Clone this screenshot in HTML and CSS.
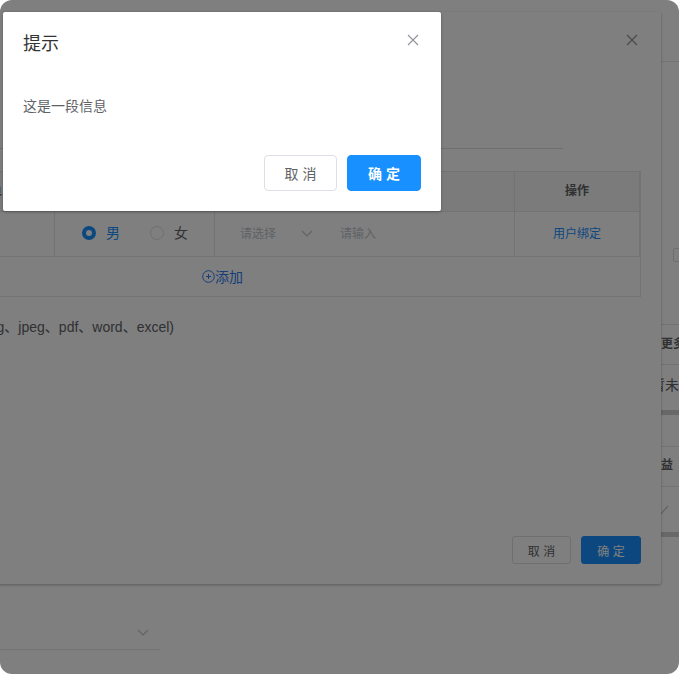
FILE: index.html
```html
<!DOCTYPE html>
<html lang="zh-CN">
<head>
<meta charset="utf-8">
<title>提示</title>
<link rel="stylesheet" href="styles.css">
</head>
<body>
<div class="window">
  <div class="page">
    <div class="page-left">
      <div class="select-under">
        <svg class="chev" width="12" height="7" viewBox="0 0 12 7"><path d="M1 1l5 5 5-5" fill="none" stroke="#c0c4cc" stroke-width="1.2"/></svg>
      </div>
    </div>
    <div class="page-right">
      <div class="checkbox-row"><span class="checkbox"></span></div>
      <div class="side-head">更多</div>
      <div class="side-cell">暂未设</div>
      <div class="side-bar"></div>
      <div class="side-head side-second">收益</div>
      <div class="side-check">
        <svg width="24" height="14" viewBox="0 0 24 14"><path d="M6 10l4 3 8-9" fill="none" stroke="#c0c4cc" stroke-width="1.2"/></svg>
      </div>
      <div class="side-bar"></div>
    </div>
  </div>

  <section class="dialog">
    <svg class="close close-back" width="12" height="12" viewBox="0 0 12 12"><path d="M1 1l10 10M11 1L1 11" stroke="#909399" stroke-width="1.1"/></svg>
    <div class="field"></div>
    <div class="table">
      <div class="row row-head">
        <div class="cell cell-name">用户名单</div>
        <div class="cell"></div>
        <div class="cell"></div>
        <div class="cell cell-center">操作</div>
      </div>
      <div class="row row-body">
        <div class="cell"></div>
        <div class="cell cell-gender">
          <span class="radio radio-on"></span><span class="radio-label label-on">男</span>
          <span class="radio radio-second"></span><span class="radio-label">女</span>
        </div>
        <div class="cell cell-inputs">
          <span class="placeholder">请选择</span>
          <svg class="input-chev" width="12" height="7" viewBox="0 0 12 7"><path d="M1 1l5 5 5-5" fill="none" stroke="#c0c4cc" stroke-width="1.1"/></svg>
          <span class="placeholder">请输入</span>
        </div>
        <div class="cell cell-center link">用户绑定</div>
      </div>
      <div class="row-add">
        <svg width="13" height="13" viewBox="0 0 13 13"><circle cx="6.5" cy="6.5" r="5.8" fill="none" stroke="#2f7cf0" stroke-width="1"/><path d="M6.5 4v5M4 6.5h5" stroke="#2f7cf0" stroke-width="1"/></svg>
        <span>添加</span>
      </div>
    </div>
    <p class="hint">支持上传文件类型(jpg、png、jpeg、pdf、word、excel)</p>
    <div class="dialog-footer">
      <button class="btn btn-small">取 消</button>
      <button class="btn btn-small btn-primary">确 定</button>
    </div>
  </section>

  <div class="mask"></div>

  <section class="alert">
    <svg class="close close-front" width="12" height="12" viewBox="0 0 12 12"><path d="M1 1l10 10M11 1L1 11" stroke="#909399" stroke-width="1.1"/></svg>
    <h2 class="alert-title">提示</h2>
    <p class="alert-msg">这是一段信息</p>
    <div class="alert-footer">
      <button class="btn btn-large">取 消</button>
      <button class="btn btn-large btn-primary btn-strong">确 定</button>
    </div>
  </section>
</div>
</body>
</html>
```
FILE: styles.css
```css
* { box-sizing: border-box; }
html, body { margin: 0; height: 100%; background: #fff; }
body { font-family: "Liberation Sans", "Noto Sans CJK SC", sans-serif; font-size: 14px; color: #606266; }

.window { position: relative; width: 679px; height: 674px; overflow: hidden; border-radius: 12px; background: #fff; }

.page { display: flex; justify-content: space-between; height: 100%; }
.page-left { width: 160px; padding-top: 614px; }
.select-under { display: flex; justify-content: flex-end; height: 36px; padding: 15px 11px 0 0; border-bottom: 1px solid #e4e7ed; }
.chev { display: block; }
.page-right { width: 29px; padding-top: 61px; display: flex; flex-direction: column; }
.page-right::before { content: ""; height: 1px; background: #e4e7ed; margin-bottom: 186px; flex: none; }
.checkbox-row { height: 76px; padding-left: 23px; flex: none; }
.checkbox { display: block; width: 14px; height: 14px; border: 1px solid #dcdfe6; border-radius: 2px; }
.side-head, .side-cell { white-space: nowrap; overflow: hidden; border-top: 1px solid #e4e7ed; flex: none; }
.side-head { height: 40px; line-height: 39px; padding-left: 11px; font-weight: 700; font-size: 12px; color: #606266; }
.side-cell { height: 46px; line-height: 41px; padding-left: 1px; font-size: 14px; color: #606266; }
.side-bar { height: 5px; background: #d0d0d0; flex: none; }
.side-second { margin-top: 31px; padding-left: 0; text-indent: -1px; line-height: 37px; }
.side-check { height: 46px; border-top: 1px solid #e4e7ed; padding-top: 15px; flex: none; }
.side-check svg { display: block; }

.dialog { position: absolute; left: -200px; top: 12px; width: 861px; height: 572px; padding: 136px 20px 20px; background: #fff; border-radius: 2px; box-shadow: 0 1px 3px rgba(0,0,0,.3); display: flex; flex-direction: column; }
.close { position: absolute; display: block; }
.close-back { right: 23px; top: 22px; }
.field { height: 1px; margin: 0 78px 22px 0; background: #dcdfe6; flex: none; }

.table { border: 1px solid #e4e7ed; flex: none; }
.row { display: grid; grid-template-columns: 234px 160px 300px 125px; }
.row-head { height: 40px; background: #f6f6f6; font-weight: 700; font-size: 12px; }
.row-body { height: 45px; font-size: 12px; }
.cell { display: flex; align-items: center; padding-bottom: 4px; border-right: 1px solid #e4e7ed; border-bottom: 1px solid #e4e7ed; }
.cell-center { justify-content: center; }
.cell-name { justify-content: flex-end; padding-right: 52px; font-size: 14px; }
.link { color: #1890ff; }
.cell-gender { padding-left: 27px; font-size: 14px; }
.radio { width: 14px; height: 14px; margin-top: 2px; border-radius: 50%; border: 1px solid #dcdfe6; background: #fff; flex: none; }
.radio-on { border: 4px solid #1890ff; }
.radio-second { margin-left: 30px; }
.radio-label { margin-left: 10px; width: 14px; }
.label-on { color: #1890ff; }
.cell-inputs { padding-left: 25px; }
.placeholder { color: #c0c4cc; }
.input-chev { margin: 2px 27px 0 25px; }
.row-add { height: 39px; display: flex; align-items: center; padding-left: 381px; color: #2f7cf0; }
.row-add span { margin: 0 0 2px 0; }

.hint { margin: 22px 0 0; width: 354px; flex: none; text-align: right; white-space: nowrap; line-height: 16px; color: #606266; font-size: 14px; }
.dialog-footer { margin-top: auto; display: flex; justify-content: flex-end; gap: 10px; }

.btn { font-family: inherit; border: 1px solid #dcdfe6; background: #fff; color: #606266; border-radius: 3px; padding: 0; }
.btn-small { width: 59px; height: 28px; font-size: 12px; }
.btn-small.btn-primary { width: 60px; }
.btn-large { width: 73px; height: 36px; font-size: 14px; border-radius: 4px; }
.btn-large.btn-primary { width: 74px; }
.btn-primary { background: #1890ff; border-color: #1890ff; color: #fff; }
.btn-strong { font-weight: 700; }

.mask { position: absolute; inset: 0; background: rgba(0,0,0,.5); }

.alert { position: absolute; left: 3px; top: 12px; width: 438px; height: 199px; padding: 20px; background: #fff; border-radius: 2px; box-shadow: 0 1px 3px rgba(0,0,0,.3); }
.close-front { right: 22px; top: 22px; }
.alert-title { margin: 0; font-weight: 400; font-size: 18px; line-height: 24px; color: #333; }
.alert-msg { margin: 40px 0 0; line-height: 20px; color: #606266; font-size: 14px; }
.alert-footer { margin-top: 39px; display: flex; justify-content: flex-end; gap: 10px; }
```
